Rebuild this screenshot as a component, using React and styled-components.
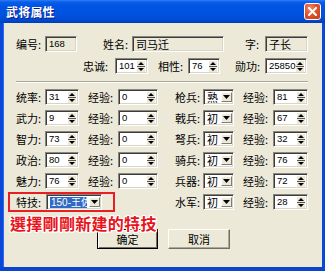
import React from "react";
import styled, { createGlobalStyle, css } from "styled-components";

const Global = createGlobalStyle`
  html, body { margin: 0; padding: 0; background: #ECE9D8; }
  #root { width: 325px; height: 271px; }
`;

const CJK = `"Noto Sans CJK SC", "Noto Sans CJK TC", sans-serif`;
const NUM = `"Liberation Sans", "Noto Sans CJK SC", sans-serif`;

const Win = styled.div`
  position: relative;
  width: 325px;
  height: 271px;
  display: flex;
  flex-direction: column;
  box-sizing: border-box;
  overflow: hidden;
`;

const TitleBar = styled.div`
  height: 23px;
  flex-shrink: 0;
  display: flex;
  align-items: center;
  padding: 0 4px 0 6px;
  background: linear-gradient(
    to bottom,
    #2f7cf5 0px,
    #0a5ee8 2px,
    #0054e3 6px,
    #0051de 16px,
    #0046cc 21px,
    #003db5 23px
  );
  box-sizing: border-box;
`;

const Title = styled.div`
  font-family: ${CJK};
  font-size: 12px;
  font-weight: 700;
  color: #fff;
  text-shadow: 1px 1px 0 #0a1e8c;
  letter-spacing: 0.2px;
`;

const CloseBtn = styled.div`
  margin-left: auto;
  width: 17px;
  height: 17px;
  box-sizing: border-box;
  border: 1px solid #fff;
  border-radius: 3px;
  background: radial-gradient(circle at 35% 30%, #f0896a 0%, #e0542c 45%, #c43a16 100%);
  display: flex;
  align-items: center;
  justify-content: center;
`;

const Body = styled.div`
  flex: 1;
  background: #ece9d8;
  border-left: 3px solid #0a48d9;
  border-right: 3px solid #0a48d9;
  border-bottom: 4px solid #0a44cf;
  box-shadow: inset 1px 0 0 #2d6cf0;
  padding: 13px 0 0 13px;
  display: flex;
  flex-direction: column;
`;

const Row = styled.div`
  display: flex;
  align-items: center;
  height: 16px;
  margin-top: ${(p) => p.$mt || 0}px;
`;

const Label = styled.div`
  flex-shrink: 0;
  width: ${(p) => p.$w}px;
  margin-left: ${(p) => p.$ml || 0}px;
  font-family: ${CJK};
  font-size: 11px;
  line-height: 16px;
  color: #000;
  white-space: nowrap;
`;

const sunken = css`
  box-sizing: border-box;
  border-style: solid;
  border-width: 1px;
  border-color: #8a8780 #fff #fff #8a8780;
  box-shadow: inset 1px 1px 0 #3c3c3c, inset -1px -1px 0 #d8d4c6;
`;

const TextBox = styled.div`
  ${sunken};
  flex-shrink: 0;
  width: ${(p) => p.$w}px;
  height: 16px;
  background: ${(p) => (p.$readonly ? "#ece9d8" : "#fff")};
  display: flex;
  align-items: center;
  padding: 0 2px 0 3px;
  font-family: ${(p) => (p.$cjk ? CJK : NUM)};
  font-size: ${(p) => (p.$cjk ? 11 : 9.5)}px;
  line-height: 14px;
  color: #000;
  white-space: nowrap;
  overflow: hidden;
`;

const BoxText = styled.span`
  flex: 1;
  min-width: 0;
  white-space: nowrap;
`;

const SpinBtn = styled.div`
  flex-shrink: 0;
  width: 8px;
  height: 11px;
  background: #ece9d8;
  display: flex;
`;

const DropBtn = styled.div`
  flex-shrink: 0;
  width: 11px;
  height: 10px;
  margin-right: -1px;
  box-sizing: border-box;
  background: #ece9d8;
  border-style: solid;
  border-width: 1px;
  border-color: #fff #7f7d75 #7f7d75 #fff;
  display: flex;
  align-items: center;
  justify-content: center;
`;

const Selected = styled.span`
  flex: 1;
  min-width: 0;
  overflow: hidden;
  background: #316ac5;
  color: #fff;
  font-family: ${NUM};
  font-size: 10px;
  line-height: 11px;
  padding-left: 1px;
  margin-right: 2px;
`;

const Separator = styled.div`
  width: 292px;
  height: 1px;
  margin-top: 7px;
  background: #aca899;
  border-bottom: 1px solid #fff;
`;

const ButtonRow = styled.div`
  display: flex;
  margin-top: 19px;
  padding-left: 81px;
  gap: 10px;
`;

const Button = styled.div`
  box-sizing: border-box;
  width: ${(p) => p.$w}px;
  height: 20px;
  background: #ece9d8;
  font-family: ${CJK};
  font-size: 11px;
  display: flex;
  align-items: center;
  justify-content: center;
  color: #000;
  ${(p) =>
    p.$default
      ? css`
          border: 1px solid #000;
          box-shadow: inset 1px 1px 0 #fff, inset -1px -1px 0 #716f64;
        `
      : css`
          border: 1px solid;
          border-color: #fff #716f64 #716f64 #fff;
          box-shadow: inset -1px -1px 0 #aca899;
        `}
`;

const Highlight = styled.div`
  position: absolute;
  left: 8px;
  top: 192px;
  width: 107px;
  height: 20px;
  box-sizing: border-box;
  border: 2px solid #ea1c24;
`;

const Note = styled.div`
  position: absolute;
  left: 10px;
  top: 214px;
  font-family: "Noto Sans CJK TC", "Noto Sans CJK SC", sans-serif;
  font-weight: 700;
  font-size: 16px;
  line-height: 18px;
  letter-spacing: 0.3px;
  color: #e8141c;
  white-space: nowrap;
  text-shadow: 1px 0 0 #fff, -1px 0 0 #fff, 0 1px 0 #fff, 0 -1px 0 #fff,
    1px 1px 0 #fff, -1px -1px 0 #fff, 1px -1px 0 #fff, -1px 1px 0 #fff;
`;

const SpinIcon = () => (
  <svg width="8" height="11" viewBox="0 0 8 11">
    <path d="M1 4 L7 4 L4 1 Z" fill="#000" />
    <rect x="0" y="5" width="8" height="1" fill="#555" />
    <path d="M1 7 L7 7 L4 10 Z" fill="#000" />
  </svg>
);

const DownIcon = () => (
  <svg width="7" height="4" viewBox="0 0 7 4">
    <path d="M0 0 L7 0 L3.5 4 Z" fill="#000" />
  </svg>
);

const Spin = ({ w, value }) => (
  <TextBox $w={w}>
    <BoxText>{value}</BoxText>
    <SpinBtn>
      <SpinIcon />
    </SpinBtn>
  </TextBox>
);

const Combo = ({ w, value }) => (
  <TextBox $w={w} $cjk>
    <BoxText>{value}</BoxText>
    <DropBtn>
      <DownIcon />
    </DropBtn>
  </TextBox>
);

const stats = [
  { a: "统率:", av: "31", b: "枪兵:", bv: "熟", ex: "81" },
  { a: "武力:", av: "9", b: "戟兵:", bv: "初", ex: "67" },
  { a: "智力:", av: "73", b: "弩兵:", bv: "初", ex: "32" },
  { a: "政治:", av: "80", b: "骑兵:", bv: "初", ex: "76" },
  { a: "魅力:", av: "76", b: "兵器:", bv: "初", ex: "72" },
];

export default function App() {
  return (
    <Win>
      <Global />
      <TitleBar>
        <Title>武将属性</Title>
        <CloseBtn>
          <svg width="9" height="9" viewBox="0 0 9 9">
            <path d="M1 1 L8 8 M8 1 L1 8" stroke="#fff" strokeWidth="2" strokeLinecap="square" />
          </svg>
        </CloseBtn>
      </TitleBar>
      <Body>
        <Row>
          <Label $w={29}>编号:</Label>
          <TextBox $w={32} $readonly>
            <BoxText>168</BoxText>
          </TextBox>
          <Label $ml={26} $w={29}>姓名:</Label>
          <TextBox $w={92} $readonly $cjk>
            <BoxText>司马迁</BoxText>
          </TextBox>
          <Label $ml={21} $w={20}>字:</Label>
          <TextBox $w={43} $readonly $cjk>
            <BoxText>子长</BoxText>
          </TextBox>
        </Row>
        <Row $mt={6}>
          <Label $ml={67} $w={32}>忠诚:</Label>
          <Spin w={33} value="101" />
          <Label $ml={10} $w={30}>相性:</Label>
          <Spin w={32} value="76" />
          <Label $ml={15} $w={30}>勋功:</Label>
          <Spin w={42} value="25850" />
        </Row>
        <Separator />
        {stats.map((s, i) => (
          <Row key={s.a} $mt={i === 0 ? 6 : 5}>
            <Label $w={29}>{s.a}</Label>
            <Spin w={34} value={s.av} />
            <Label $ml={9} $w={30}>经验:</Label>
            <Spin w={40} value="0" />
            <Label $ml={17} $w={28}>{s.b}</Label>
            <Combo w={31} value={s.bv} />
            <Label $ml={9} $w={30}>经验:</Label>
            <Spin w={35} value={s.ex} />
          </Row>
        ))}
        <Row $mt={5}>
          <Label $w={30}>特技:</Label>
          <TextBox $w={56}>
            <Selected>150-王佐</Selected>
            <DropBtn>
              <DownIcon />
            </DropBtn>
          </TextBox>
          <Label $ml={73} $w={28}>水军:</Label>
          <Combo w={31} value="初" />
          <Label $ml={9} $w={30}>经验:</Label>
          <Spin w={35} value="28" />
        </Row>
        <ButtonRow>
          <Button $w={61} $default>确定</Button>
          <Button $w={62}>取消</Button>
        </ButtonRow>
      </Body>
      <Highlight />
      <Note>選擇剛剛新建的特技</Note>
    </Win>
  );
}
